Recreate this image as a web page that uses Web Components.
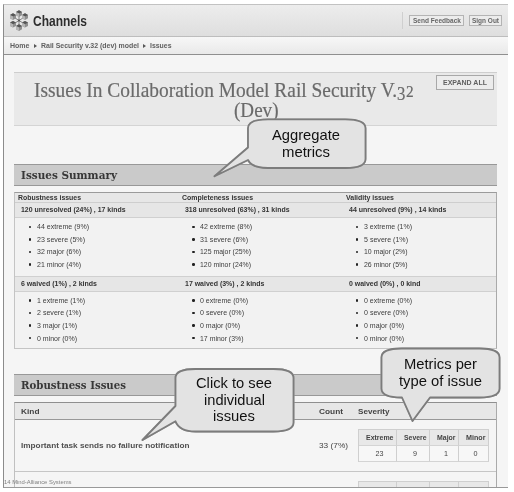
<!DOCTYPE html>
<html lang="en">
<head>
<meta charset="utf-8">
<title>Channels</title>
<style>
body { margin: 0; background: #fff; font-family: "Liberation Sans", Arial, sans-serif; width: 514px; height: 492px; overflow: hidden; position: relative; }
</style>
</head>
<body>
<channels-app></channels-app>
<call-out box="248,119.3,117.5,48.7" tail="248,147.5 214.5,176.3 248,160" side="left" lines="Aggregate|metrics" widths="68,48" top="127"></call-out>
<call-out box="175.5,369,118,62.5" tail="175.5,406 142.5,440 175.5,421.3" side="left" lines="Click to see|individual|issues" widths="76,61,42" top="375"></call-out>
<call-out box="381.5,348.5,118,49" tail="430,397.5 412.5,421 402,397.5" side="bottom" lines="Metrics per|type of issue" widths="73,83" top="356"></call-out>
<script>
const define = (name, render) => customElements.define(name, class extends HTMLElement {
  connectedCallback() {
    if (this.shadowRoot) return;
    const root = this.attachShadow({ mode: 'open' });
    root.innerHTML = render(this);
    if (name === 'fit-text') {
      const s = root.querySelector('span');
      const w = s.getBoundingClientRect().width;
      if (w) s.style.transform = `scaleX(${this.getAttribute('w') / w})`;
    }
  }
});

/* Single line of text fitted to a given width */
define('fit-text', el => `<style>
  :host { display: block; flex: none; width: ${el.getAttribute('w')}px; white-space: nowrap; }
  span { display: inline-block; transform-origin: 0 50%; }
</style><span><slot></slot></span>`);

define('channels-logo', () => {
  const pts = [[10, 3.6], [16, 6.6], [16, 14.2], [10, 17.6], [4, 14.2], [4, 6.6]];
  const cubes = pts.map(([x, y]) => `<g transform="translate(${x} ${y})">
    <path d="M-3-1.6 0-3.3 3-1.6 3 1.7 0 3.3-3 1.7z" fill="#8f8f8f"/>
    <path d="M-3-1.6 0-3.3 3-1.6 0 0z" fill="#555"/>
    <path d="M-3-1.6 0 0V3.3L-3 1.7z" fill="#b5b5b5"/></g>`).join('');
  return `<style>:host { display: block; width: 20px; height: 21px; } svg { display: block; }</style>
  <svg width="20" height="21" viewBox="0 0 20 21"><path d="M10 4v13M4.500 7l11 7M15.500 7l-11 7" stroke="#777" stroke-width=".9"/>${cubes}<circle cx="10" cy="10.500" r="1.100" fill="#555"/></svg>`;
});

define('head-button', () => `<style>
  :host { display: flex; justify-content: center; align-items: center; box-sizing: border-box; border: 1px solid #b4b4b4; background: #ececec; color: #666; font-weight: bold; }
</style><slot></slot>`);

define('app-header', () => `<style>
  :host { display: flex; align-items: center; box-sizing: border-box; height: 32px; padding: 0 6px 0 5px; border-bottom: 1px solid #bdbdbd; background: linear-gradient(#ededed, #dedede); }
  .name { margin-left: 3.500px; font: bold 15.500px/18px "Liberation Sans", sans-serif; color: #2e2e2e; }
  .sep { width: 1px; height: 17px; background: #cfcfcf; margin: 0 6px 0 auto; }
  .a { width: 55px; height: 11px; font-size: 7px; margin-right: 5px; }
  .b { width: 33px; height: 11px; font-size: 7px; }
</style><channels-logo></channels-logo><fit-text class="name" w="54">Channels</fit-text><div class="sep"></div>
<head-button class="a"><fit-text w="48">Send Feedback</fit-text></head-button><head-button class="b"><fit-text w="27">Sign Out</fit-text></head-button>`);

define('crumb-trail', () => `<style>
  :host { display: flex; align-items: center; box-sizing: border-box; height: 18px; padding-left: 6px; border-bottom: 1px solid #8f8f8f; background: linear-gradient(#f7f7f7, #e9e9e9); font-size: 7px; font-weight: bold; color: #606060; }
  i { width: 0; height: 0; border: 2px solid transparent; border-left: 3px solid #555; border-right: 0; margin: 0 4px; }
</style><fit-text w="19.500">Home</fit-text><i></i><fit-text w="98">Rail Security v.32 (dev) model</fit-text><i></i><fit-text w="21.500">Issues</fit-text>`);

define('page-title', () => `<style>
  :host { display: grid; grid-template-columns: 20px 380px 1fr; box-sizing: border-box; height: 54px; border-top: 1px solid #cecece; border-bottom: 1px solid #d4d4d4; background: #e9e9e9; }
  h1 { grid-column: 2; margin: 7px 0 0; font: 21.500px/20px "Liberation Serif", serif; color: #6a6a6a; -webkit-text-stroke: .2px #6a6a6a; }
  h1 fit-text { height: 20px; }
  .dev { margin-left: 199.500px; }
  small { font-size: 17px; line-height: 1; letter-spacing: .5px; }
  .low { position: relative; top: 2.500px; font-size: 18.500px; }
  .x { justify-self: end; margin: 2px 3px 0 0; width: 58px; height: 15px; border-color: #a8a8a8; font-size: 7.500px; color: #606060; }
</style><h1><fit-text w="380">Issues In Collaboration Model Rail Security V.<small class="low">3</small><small>2</small></fit-text><fit-text class="dev" w="44.500">(Dev)</fit-text></h1>
<head-button class="x"><fit-text w="44">EXPAND ALL</fit-text></head-button>`);

define('section-bar', el => `<style>
  :host { display: flex; align-items: center; box-sizing: border-box; height: 22px; padding-left: 7px; border-top: 1px solid #989898; border-bottom: 1px solid #989898; background: #cacaca; font: bold 11.500px/20px "DejaVu Serif", serif; color: #373737; }
</style><fit-text w="${el.getAttribute('w')}"><slot></slot></fit-text>`);

const summary = [
  ['Robustness issues', 63, '120 unresolved (24%) , 17 kinds', 104.5, [['44 extreme (9%)', 52], ['23 severe (5%)', 48], ['32 major (6%)', 44], ['21 minor (4%)', 44]],
   '6 waived (1%) , 2 kinds', 76, [['1 extreme (1%)', 48], ['2 severe (1%)', 44], ['3 major (1%)', 40], ['0 minor (0%)', 40]]],
  ['Completeness issues', 71, '318 unresolved (63%) , 31 kinds', 104.5, [['42 extreme (8%)', 52], ['31 severe (6%)', 48], ['125 major (25%)', 51], ['120 minor (24%)', 51]],
   '17 waived (3%) , 2 kinds', 79.5, [['0 extreme (0%)', 48], ['0 severe (0%)', 44], ['0 major (0%)', 40], ['17 minor (3%)', 43.5]]],
  ['Validity issues', 48, '44 unresolved (9%) , 14 kinds', 97.5, [['3 extreme (1%)', 48], ['5 severe (1%)', 44], ['10 major (2%)', 43.5], ['26 minor (5%)', 43.5]],
   '0 waived (0%) , 0 kind', 71.5, [['0 extreme (0%)', 48], ['0 severe (0%)', 44], ['0 major (0%)', 40], ['0 minor (0%)', 40]]]
];
define('metric-list', el => `<style>
  :host { display: block; padding: 2.500px 0 0 13.500px; box-sizing: border-box; height: 57.500px; font-size: 7.200px; color: #3c3c3c; }
  div { display: flex; align-items: center; height: 12.600px; }
  i { width: 2.500px; height: 2.500px; border-radius: 50%; background: #222; margin-right: 5.500px; }
</style>${JSON.parse(el.getAttribute('items')).map(([t, w]) => `<div><i></i><fit-text w="${w}">${t}</fit-text></div>`).join('')}`);

define('issue-summary', () => {
  const row = (cls, f) => `<div class="row ${cls}">${summary.map(c => `<div>${f(c)}</div>`).join('')}</div>`;
  const list = l => `<metric-list items='${JSON.stringify(l)}'></metric-list>`;
  return `<style>
  :host { display: block; box-sizing: border-box; height: 157px; border: 1px solid #c4c4c4; border-top-color: #9b9b9b; border-right-color: #aaa; background: #f2f2f2; font-size: 7.200px; color: #333; }
  .row { display: grid; grid-template-columns: 163.700px 163.700px 1fr; }
  .head { height: 9px; line-height: 9px; background: #e7e7e7; font-weight: bold; border-bottom: 1px solid #cecece; }
  .head fit-text { margin-left: 3.200px; }
  .band { box-sizing: border-box; height: 15px; line-height: 14px; background: #e6e6e6; border-bottom: 1px solid #d0d0d0; font-weight: bold; }
  .second { height: 16px; border-top: 1px solid #d0d0d0; }
  .band fit-text { margin-left: 6.200px; }
  </style>${row('head', c => `<fit-text w="${c[1]}">${c[0]}</fit-text>`)}
  ${row('band', c => `<fit-text w="${c[3]}">${c[2]}</fit-text>`)}${row('', c => list(c[4]))}
  ${row('band second', c => `<fit-text w="${c[6]}">${c[5]}</fit-text>`)}${row('', c => list(c[7]))}`;
});

define('severity-table', el => {
  const heads = [['Extreme', 27.5], ['Severe', 22.5], ['Major', 18.5], ['Minor', 19.5]];
  const vals = (el.getAttribute('values') || '').split(',').filter(Boolean);
  return `<style>
  :host { display: grid; grid-template-columns: 38px 33px 29px 30px; grid-auto-rows: 16px; width: 131px; box-sizing: border-box; border-left: 1px solid #cfcfcf; border-top: 1px solid #cfcfcf; font-size: 7.200px; color: #444; }
  div { display: flex; align-items: center; box-sizing: border-box; border-right: 1px solid #cfcfcf; border-bottom: 1px solid #d4d4d4; }
  .h { background: #e8e8e8; font-weight: bold; justify-content: flex-end; padding-right: 3px; }
  .v { justify-content: center; background: #f7f7f7; padding-left: 4px; }
  </style>${heads.map(([t, w]) => `<div class="h"><fit-text w="${w}">${t}</fit-text></div>`).join('')}${vals.map(v => `<div class="v"><fit-text w="${v.length * 4}">${v}</fit-text></div>`).join('')}`;
});

define('issue-table', () => `<style>
  :host { display: block; border: 1px solid #c0c0c0; border-top-color: #8f8f8f; border-right-color: #aaa; border-bottom: 0; font-size: 8px; color: #444; }
  .row { display: grid; grid-template-columns: 297.500px 39.500px 1fr; align-items: center; padding-left: 6px; box-sizing: border-box; height: 52px; border-bottom: 1px solid #c6c6c6; }
  .head { height: 17px; background: #e7e7e7; border-color: #989898; font-weight: bold; }
  .kind { font-weight: bold; color: #505050; }
  .next { border: 0; align-items: start; padding-top: 9px; }
  .next severity-table { grid-column: 3; }
</style><div class="row head"><fit-text w="18.500">Kind</fit-text><fit-text w="24">Count</fit-text><fit-text w="31.500">Severity</fit-text></div>
<div class="row"><fit-text class="kind" w="168.500">Important task sends no failure notification</fit-text><fit-text w="29">33 (7%)</fit-text><severity-table values="23,9,1,0"></severity-table></div>
<div class="row next"><severity-table></severity-table></div>`);

define('channels-app', () => `<style>
  :host { display: block; position: relative; box-sizing: border-box; margin: 4px 0 0 3px; width: 505px; height: 484px; overflow: hidden; border-left: 1px solid #8c8c8c; border-top: 1px solid #c2c2c2; border-bottom: 1px solid #999; background: #f5f5f5; filter: grayscale(1); }
  main { display: flex; flex-direction: column; padding: 17px 11px 0 10px; }
  issue-summary { margin: 6px 0 25px; }
  issue-table { margin-top: 6px; }
  page-title { margin-bottom: 38px; }
  footer { position: absolute; left: 0; bottom: 0; font-size: 6.200px; line-height: 10px; color: #808080; }
</style><app-header></app-header><crumb-trail></crumb-trail>
<main><page-title></page-title><section-bar w="96">Issues Summary</section-bar><issue-summary></issue-summary>
<section-bar w="105">Robustness Issues</section-bar><issue-table></issue-table></main>
<footer><fit-text w="67.500">14 Mind-Alliance Systems</fit-text></footer>`);

/* Speech bubble laid over the page, with its pointer at the middle point of "tail" */
define('call-out', el => {
  const [x, y, w, h] = el.getAttribute('box').split(',').map(Number);
  const t = el.getAttribute('tail').split(' ').join(' L');
  const rx = 20, ry = 9, r = x + w, b = y + h;
  const d = el.getAttribute('side') === 'left'
    ? `M${x + rx} ${y}H${r - rx}Q${r} ${y} ${r} ${y + ry}V${b - ry}Q${r} ${b} ${r - rx} ${b}H${x + rx}Q${x + 4} ${b} ${t.split(' L')[2]}L${t.split(' L')[1]}L${t.split(' L')[0]}V${y + ry}Q${x} ${y} ${x + rx} ${y}Z`
    : `M${x + rx} ${y}H${r - rx}Q${r} ${y} ${r} ${y + ry}V${b - ry}Q${r} ${b} ${r - rx} ${b}L${t}H${x + rx}Q${x} ${b} ${x} ${b - ry}V${y + ry}Q${x} ${y} ${x + rx} ${y}Z`;
  const ws = el.getAttribute('widths').split(',');
  return `<style>
  :host { position: absolute; left: 0; top: 0; width: 514px; height: 492px; pointer-events: none; }
  svg { position: absolute; inset: 0; filter: drop-shadow(.5px .5px .3px #aaa); }
  .t { position: absolute; left: ${x - .5}px; top: ${el.getAttribute('top')}px; width: ${w}px; display: flex; flex-direction: column; align-items: center; font-size: 14.500px; line-height: 16.500px; color: #111; }
  </style><svg width="514" height="492"><path d="${d}" fill="#e3e3e3" stroke="#7c7c7c" stroke-width="1.800" stroke-linejoin="round"/></svg>
  <div class="t">${el.getAttribute('lines').split('|').map((l, i) => `<fit-text w="${ws[i]}">${l}</fit-text>`).join('')}</div>`;
});
</script>
</body>
</html>
